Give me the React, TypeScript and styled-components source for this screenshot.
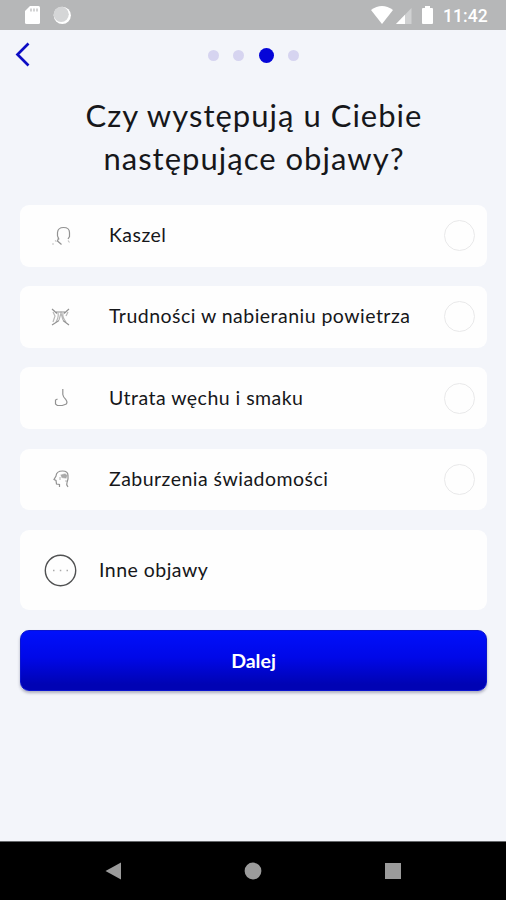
import React from "react";
import styled, { createGlobalStyle } from "styled-components";

const GlobalStyle = createGlobalStyle`
  * { box-sizing: border-box; }
  body { margin: 0; background: #f3f5fa; }
`;

const Screen = styled.div`
  width: 506px;
  height: 900px;
  display: flex;
  flex-direction: column;
  overflow: hidden;
  background: #f3f5fa;
  color: #16171a;
  font-family: Lato, "Noto Sans", sans-serif;
`;

const StatusBar = styled.header`
  height: 30px;
  flex: none;
  display: flex;
  justify-content: space-between;
  background: #b6b7b8;
  svg { display: block; }
`;

const StatusRight = styled.div`
  display: flex;
`;

const Clock = styled.span`
  width: 63px;
  color: #fff;
  font: 500 17.5px/32px Roboto, sans-serif;
  letter-spacing: 0.1px;
`;

const TopBar = styled.nav`
  height: 50px;
  flex: none;
  display: grid;
  grid-template-columns: 207.5px 1fr;
  align-items: center;
`;

const BackButton = styled.button`
  width: 46px;
  height: 50px;
  padding: 0;
  border: 0;
  background: none;
  svg { display: block; }
`;

const Steps = styled.div`
  display: flex;
  align-items: center;
  gap: 14.6px;
`;

const Step = styled.i<{ $active?: boolean }>`
  width: ${(p) => (p.$active ? 15 : 11)}px;
  height: ${(p) => (p.$active ? 15 : 11)}px;
  border-radius: 50%;
  background: ${(p) => (p.$active ? "#0505d8" : "#d6d4f0")};
`;

const Title = styled.h1`
  margin: 14px 0 0;
  height: 111px;
  padding-left: 2px;
  flex: none;
  text-align: center;
  font-size: 31px;
  line-height: 43px;
  font-weight: 400;
`;

const Line = styled.span`
  display: block;
  letter-spacing: 1.02px;
`;

const List = styled.main`
  flex: 1;
  display: flex;
  flex-direction: column;
  gap: 19.7px;
  padding: 0 19px 0 20px;
`;

const Card = styled.div<{ $tall?: boolean }>`
  height: ${(p) => (p.$tall ? 80.5 : 61.5)}px;
  flex: none;
  display: flex;
  align-items: center;
  padding: 0 12px 0 ${(p) => (p.$tall ? 24 : 29)}px;
  border-radius: 9px;
  background: #fefefe;
  svg { flex: none; }
`;

const Label = styled.span<{ $indent: number }>`
  flex: 1;
  margin-left: ${(p) => p.$indent}px;
  padding-bottom: 1px;
  font-size: 19.5px;
  line-height: 26px;
  letter-spacing: 0.47px;
  white-space: nowrap;
`;

const Radio = styled.i`
  width: 31px;
  height: 31px;
  flex: none;
  border: 1.5px solid #e9e9ea;
  border-radius: 50%;
`;

const NextButton = styled.button`
  height: 61.5px;
  flex: none;
  padding: 0;
  border: 1.5px solid #0a14cf;
  border-radius: 9px;
  background: linear-gradient(#0010fb, #0008e8 45%, #0003b4 90%);
  box-shadow: 0 2px 3px rgba(40, 40, 80, 0.35);
  color: #fff;
  font: 700 19.5px/59px Lato, sans-serif;
`;

const SystemNav = styled.footer`
  height: 59px;
  flex: none;
  display: flex;
  align-items: center;
  justify-content: space-between;
  padding: 0 103px;
  border-top: 1px solid #66686b;
  background: #000;
`;

const icons: Record<string, React.ReactNode> = {
  cough: (
    <>
      <path d="M8 13.500 6.500 10V6.500Q7 1.500 12.500 1.500 18.500 1.500 18.500 6.500V10.500L17 13" />
      <path d="M7.500 12 6.500 15 10.500 18.500" />
      <path d="M1 18h2M4 14.500l1.500 1M17 14.500l1.500 2" strokeOpacity=".55" />
    </>
  ),
  breath: (
    <>
      <path d="M1 2l5 4.500M18 2l-5 4.500M5 5h9M1 18l7-4.500M18 18l-6-4.500" />
      <path d="M7 6q1 4-2 9M12 6q-1 4 3 9M2 5l2 4-2 6M17 5l-2 4M8 13l2-7 2 7" strokeOpacity=".65" />
    </>
  ),
  nose: (
    <>
      <path d="M11.800 1v5.500q.5 3 3 5 2 2.500.5 4.500l-4 1.500h-5L4.500 16v-4l2-1" />
    </>
  ),
  head: (
    <>
      <path d="M8.500 18v-2.500L5.500 15 5 11.500l-2-1L5 7q.5-5 6.500-5Q17 2 17 6.500V10l-1 3.500q-1 2 1 4.500" />
      <path d="M10 6l4-1 2 1.500-1 2.500-4-.5z" fill="#aaa" strokeOpacity=".45" />
      <path d="M9 8v3M14 12h2" strokeOpacity=".6" />
    </>
  ),
};

const symptoms = [
  { icon: "cough", text: "Kaszel" },
  { icon: "breath", text: "Trudności w nabieraniu powietrza" },
  { icon: "nose", text: "Utrata węchu i smaku" },
  { icon: "head", text: "Zaburzenia świadomości" },
];

export default function App() {
  return (
    <Screen>
      <GlobalStyle />
      <StatusBar>
        <svg width="80" height="30" viewBox="0 0 80 30">
          <path d="M30 6h8.500q1.500 0 1.500 1.500v15q0 1.500-1.500 1.500h-12q-1.500 0-1.500-1.500V11z" fill="#fff" />
          <path d="M31 8.500v3M34 8.500v3M37 8.500v3" stroke="#b6b7b8" strokeWidth="1.200" />
          <circle cx="62.300" cy="15.300" r="8.600" fill="#fff" />
          <circle cx="61.200" cy="14.300" r="7.600" fill="#d5d6d7" />
        </svg>
        <StatusRight>
          <svg width="72" height="30" viewBox="0 0 72 30">
            <path d="M0 10Q11 2 22 10L11 24z" fill="#fff" />
            <path d="M40.500 8v16H25z" fill="#d0d1d2" />
            <path d="M34 14.800V24h-9z" fill="#fff" />
            <path d="M54 6h5v2h2q1 0 1 1v14q0 1-1 1h-9q-1 0-1-1V9q0-1 1-1h2z" fill="#fff" />
          </svg>
          <Clock>11:42</Clock>
        </StatusRight>
      </StatusBar>
      <TopBar>
        <BackButton aria-label="Wstecz">
          <svg width="46" height="50" viewBox="0 0 46 50">
            <path d="M28.500 13.500 17.500 24.500 28.500 35.500" fill="none" stroke="#0c0cc4" strokeWidth="2.700" />
          </svg>
        </BackButton>
        <Steps>
          <Step />
          <Step />
          <Step $active />
          <Step />
        </Steps>
      </TopBar>
      <Title>
        <Line>Czy występują u Ciebie</Line>
        <Line>następujące objawy?</Line>
      </Title>
      <List>
        {symptoms.map((s) => (
          <Card key={s.icon}>
            <svg width="24" height="20" viewBox="-2 0 24 20" fill="none" stroke="#929292" strokeWidth="1.200">
              {icons[s.icon]}
            </svg>
            <Label $indent={36}>{s.text}</Label>
            <Radio />
          </Card>
        ))}
        <Card $tall>
          <svg width="33" height="33" viewBox="0 0 33 33">
            <circle cx="16.500" cy="16.500" r="15.200" fill="none" stroke="#505152" strokeWidth="1.400" />
            <path d="M9 16.500h1.500M15.800 16.500h1.500M22.500 16.500H24" stroke="#aaa" strokeWidth="1.500" />
          </svg>
          <Label $indent={22}>Inne objawy</Label>
        </Card>
        <NextButton>Dalej</NextButton>
      </List>
      <SystemNav>
        <svg width="20" height="20" viewBox="0 0 20 20"><path d="M2.500 10 18 1.500v17z" fill="#9b9b9b" /></svg>
        <svg width="20" height="20" viewBox="0 0 20 20"><circle cx="10" cy="10" r="8.400" fill="#9b9b9b" /></svg>
        <svg width="20" height="20" viewBox="0 0 20 20"><path d="M2 2h16v16H2z" fill="#9b9b9b" /></svg>
      </SystemNav>
    </Screen>
  );
}
